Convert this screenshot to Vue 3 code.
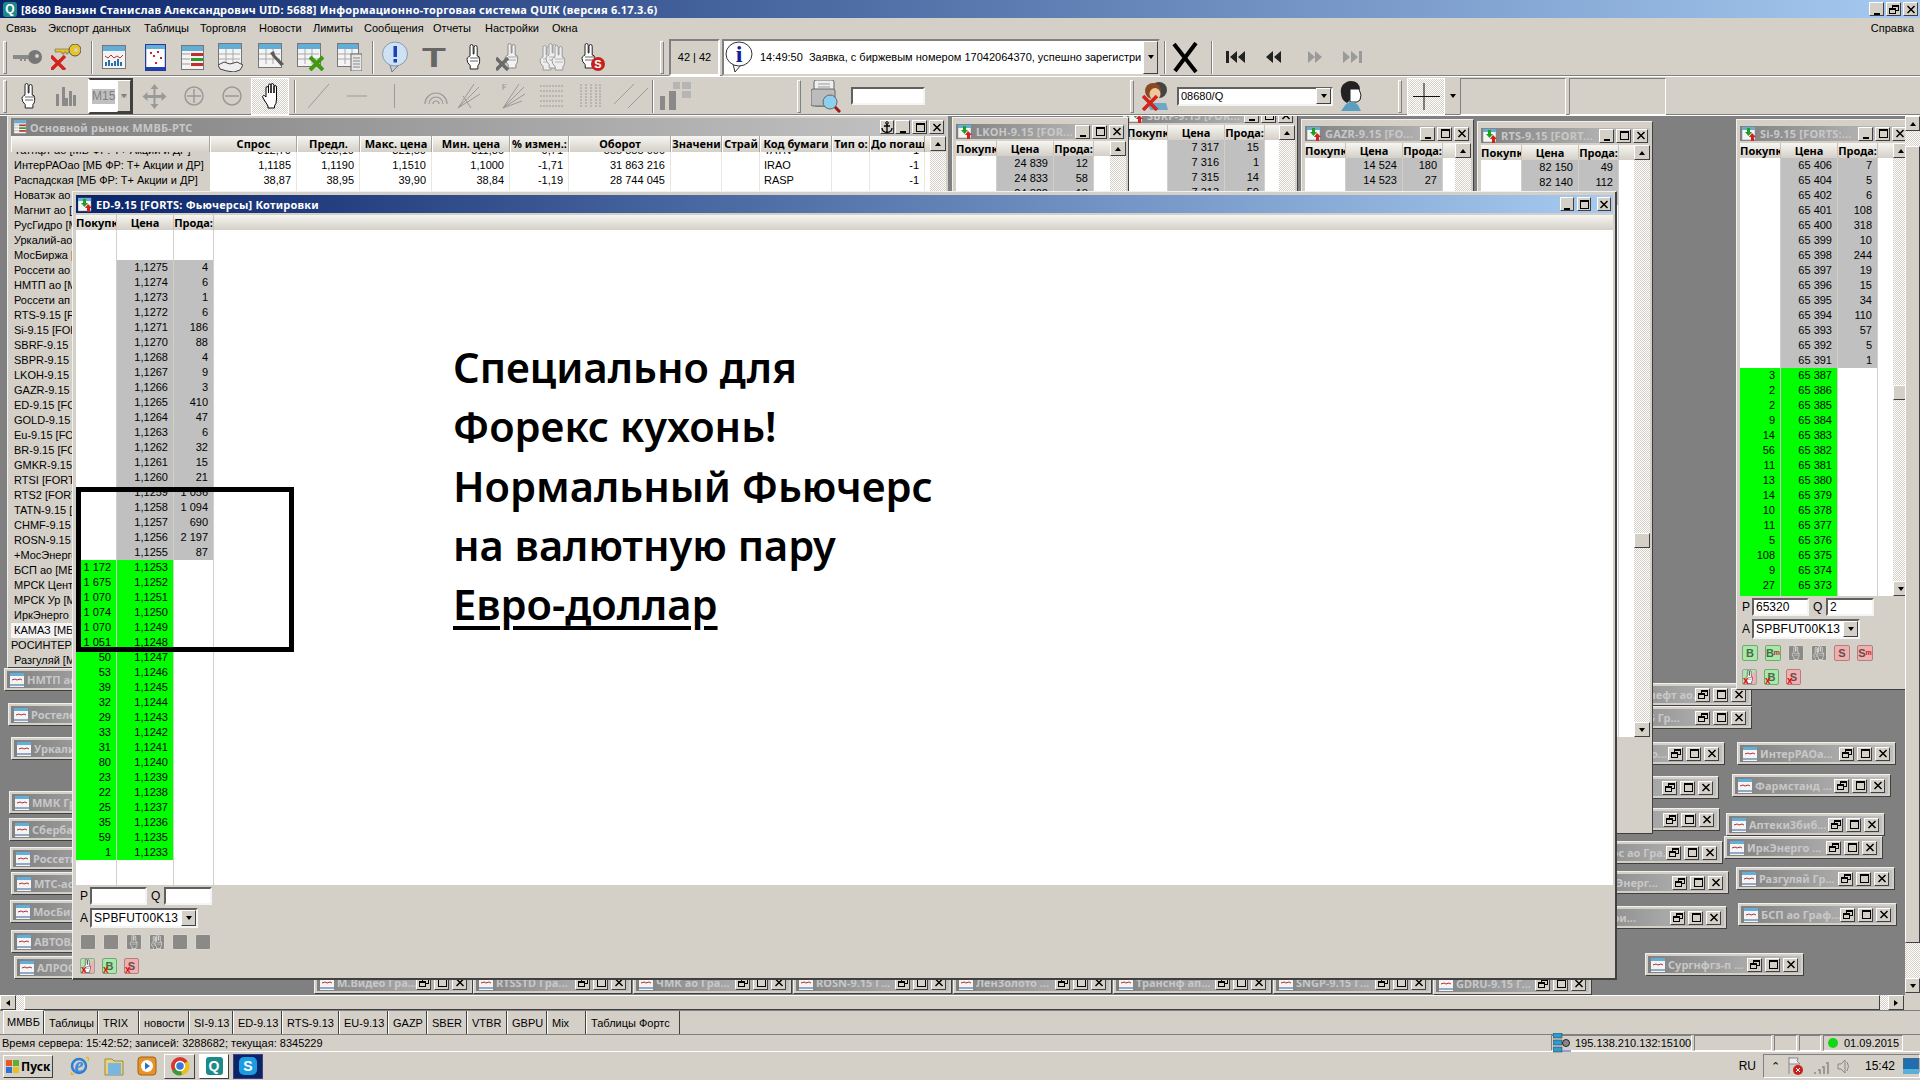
<script setup>
// QUIK terminal screenshot. MDI windows keep their place on the canvas, everything else flows.
const MDI_TOP = 116

const handPath = 'M5 12V2.5q0-2 1.6-2t1.6 2V10h.8V3.5q0-2 1.6-2t1.6 2V12q2.4.2 2.4 2.4v3.2q0 2.6-1.7 4V25H5.2v-3.4Q2 18.8 2 15.4q0-1.8 1.4-2.4z'
const hand = (dx = 0, dy = 0, fill = '#fff', stroke = '#222') =>
  `<path transform="translate(${dx} ${dy})" d="${handPath}" fill="${fill}" stroke="${stroke}" stroke-width="1"/><path transform="translate(${dx} ${dy})" d="M5 14h9M5 17h8" stroke="${stroke}" stroke-width=".7" fill="none"/>`
const redX = (x, y, s = 12, c = '#c8201c', sw = 3) =>
  `<path d="M${x} ${y}l${s} ${s}M${x + s} ${y}l-${s} ${s}" stroke="${c}" stroke-width="${sw}"/>`
const sheet = (w, h, inner = '') =>
  `<rect x=".5" y=".5" width="${w - 1}" height="${h - 1}" fill="#f4f4f4" stroke="#777"/><rect x="1" y="1" width="${w - 2}" height="5" fill="#62aed6"/>${inner}`
const grid = 'M1 11h21M1 16h21M8 6v15M15 6v15'

const icons = {
  keyGray: '<path d="M0 5h15v4h-2v2h-2V9H9v2H7V9H0z" fill="#8a8a8a"/><circle cx="22" cy="7" r="7" fill="#777"/><circle cx="24" cy="6" r="2" fill="#d4d0c8"/>',
  keyYellow: '<path d="M4 5h15v3h-2v2h-2V8h-2v2h-2V8H4z" fill="#e8c422" stroke="#666" stroke-width=".6"/><circle cx="24" cy="6" r="6" fill="#e8c422" stroke="#555"/><circle cx="25" cy="6" r="2" fill="#d4d0c8"/>' + redX(0, 12, 14, '#d2231c', 3.4),
  chart: sheet(24, 24, '<path d="M3 11l3 2 3-3 3 3 3-2 3 2 3-3" stroke="#c03030" fill="none"/><path d="M4 21v-4M7 21v-6M10 21v-3M13 21v-5M16 21v-7M19 21v-4" stroke="#2a6fa8" stroke-width="2"/>'),
  dots: '<rect x=".5" y=".5" width="20" height="26" fill="#fff" stroke="#223a9a" stroke-width="1.5"/><rect x="1" y="1" width="19" height="4" fill="#62aed6"/><rect x="1" y="23" width="19" height="3" fill="#2040b0"/><path d="M5 9h2M12 8h2M8 12h2M15 14h2M10 19h2" stroke="#d02020" stroke-width="2"/>',
  rows: sheet(23, 25, '<path d="M1 9h8M1 14h8M1 19h8" stroke="#9a9a9a"/><rect x="10" y="8" width="12" height="3" fill="#c03030"/><rect x="10" y="13" width="12" height="3" fill="#2a9a30"/><rect x="10" y="18" width="12" height="3" fill="#c03030"/>'),
  shake: sheet(24, 22, `<path d="${grid}" stroke="#aaa" fill="none"/>`) + '<path d="M0 22l6-3 6 2 7-2 6 3-3 5-6 2-7-1-7-2z" fill="#eee" stroke="#444"/>',
  wrench: sheet(24, 25, `<path d="${grid}" stroke="#aaa" fill="none"/>`) + '<path d="M12 10l3 4 8 9 3-2-9-9-1-4z" fill="#5a5a5a"/>',
  tblX: sheet(24, 24, `<path d="${grid}" stroke="#aaa" fill="none"/>`) + redX(13, 14, 13, '#3f9a12', 4),
  tblDoc: sheet(22, 24, `<path d="${grid}" stroke="#aaa" fill="none"/>`) + '<rect x="14" y="11" width="11" height="17" fill="#e6e6e6" stroke="#666"/><path d="M16 15h7M16 18h7M16 21h7M16 24h7" stroke="#888"/>',
  alert: '<path d="M8 24l2 7 6-6z" fill="#bcd0e0" stroke="#777"/><ellipse cx="13" cy="13" rx="12.5" ry="12" fill="#cfe2f3" stroke="#8a9aaa"/><rect x="11.500" y="5" width="3.500" height="11" fill="#1844b8"/><rect x="11.500" y="18" width="3.500" height="3.500" fill="#1844b8"/>',
  tee: '<text x="8.6" y="24" transform="scale(1.4 1)" text-anchor="middle" font-family="Liberation Sans" font-weight="700" font-size="28" fill="#666">T</text>',
  hand: hand(0, 0),
  handX: hand(7, 0, '#f2f2f2', '#888') + redX(0, 15, 12, '#6a6a6a', 3.4),
  hands: hand(0, 2, '#eee', '#999') + hand(6, 0, '#eee', '#999') + hand(12, 2, '#eee', '#999'),
  handW: hand(3, 0, '#8c8a86', '#fff'),
  handsW: hand(0, 2, '#8c8a86', '#fff') + hand(6, 0, '#8c8a86', '#fff'),
  handS: hand(0, 0) + '<circle cx="18" cy="21" r="7" fill="#c8201c"/><text x="18" y="25" text-anchor="middle" font-family="Liberation Sans" font-weight="700" font-size="11" fill="#fff">S</text>',
  info: '<path d="M8 23l2 8 6-7z" fill="#fff" stroke="#333"/><ellipse cx="14" cy="13" rx="13" ry="12" fill="#fff" stroke="#333"/><text x="14" y="21" text-anchor="middle" font-family="Liberation Serif" font-weight="700" font-size="24" fill="#1020a0">i</text>',
  bigX: '<path d="M2 2l22 28M24 1L3 29" stroke="#000" stroke-width="4"/>',
  first: '<path d="M0 0h3v12H0zM11 0v12L4 6zM19 0v12l-7-6z" fill="#222"/>',
  prev: '<path d="M9 0v12L2 6zM17 0v12l-7-6z" fill="#222"/>',
  next: '<path d="M0 0v12l7-6zM7 0v12l7-6z" fill="#9a9a9a"/>',
  last: '<path d="M0 0v12l7-6zM8 0v12l7-6zM16 0h3v12h-3z" fill="#9a9a9a"/>',
  bars: '<path d="M1 10h3v12H1zM7 3h3v19H7zM10 14h3v8h-3zM14 7h3v15h-3zM18 11h3v11h-3z" fill="#8a8a8a"/>',
  move: '<path d="M12.500 0l4 5h-3v6h6V8l5 4.500-5 4.500v-3h-6v6h3l-4 5-4-5h3v-6h-6v3l-5-4.500 5-4.500v3h6V5h-3z" fill="#9a9a9a"/>',
  plus: '<circle cx="10" cy="10" r="9" fill="none" stroke="#9a9a9a" stroke-width="1.500"/><path d="M3 10h14M10 3v14" stroke="#9a9a9a" stroke-width="1.500"/>',
  minus: '<circle cx="10" cy="10" r="9" fill="none" stroke="#9a9a9a" stroke-width="1.500"/><path d="M3 10h14" stroke="#9a9a9a" stroke-width="1.500"/>',
  palm: '<path d="M5 12V5q0-1.500 1.200-1.500T7.500 5v5V2.500q0-1.500 1.200-1.500t1.300 1.500V10V2q0-1.500 1.200-1.500T13 2v8V4q0-1.500 1.200-1.500T15.500 4v12q0 5-2 7v2H7v-2l-5-8q-1-2 .5-2.500 1-.4 2.500 1.500z" fill="#fff" stroke="#000"/>',
  diag: '<path d="M0 24L21 0" stroke="#9a9a9a"/>',
  horz: '<path d="M0 5h20" stroke="#9a9a9a"/>',
  vert: '<path d="M1.500 0v24" stroke="#9a9a9a"/>',
  arc: '<path d="M1 17a11 11 0 0 1 22 0M5 17a7 7 0 0 1 14 0M9 17a3 3 0 0 1 6 0" fill="none" stroke="#9a9a9a" stroke-width="1.200"/>',
  fan: '<path d="M1 24L22 3M1 24L17 0M1 24L23 10M6 12l8 12" stroke="#9a9a9a" fill="none"/>',
  fanF: '<path d="M1 24L22 3M1 24L17 0M1 24L23 10M1 24L20 17" stroke="#9a9a9a" fill="none"/><path d="M1 0h4M1 0v6M1 3h3" stroke="#9a9a9a"/>',
  lines: '<path d="M0 1h23M0 6h23M0 11h23M0 16h23M0 21h23" stroke="#9a9a9a" stroke-dasharray="2 1"/>',
  vlines: '<path d="M1 0v24M6 0v24M11 0v24M16 0v24M20 0v24" stroke="#9a9a9a" stroke-dasharray="2 1"/>',
  dlines: '<path d="M0 20L20 0M14 24L34 4" stroke="#9a9a9a"/>',
  candles: '<rect x="0" y="14" width="5" height="14" fill="#8a8a8a"/><rect x="9" y="9" width="7" height="19" fill="#8a8a8a"/><rect x="13" y="0" width="7" height="7" fill="#b5b5b5"/><rect x="22" y="0" width="9" height="7" fill="#b5b5b5"/><rect x="22" y="9" width="9" height="7" fill="#b5b5b5"/>',
  search: '<rect x="3" y="0" width="20" height="26" rx="2" fill="#eee" stroke="#666"/><rect x="0" y="9" width="24" height="17" rx="2" fill="#bcbcbc" stroke="#666"/><path d="M7 4h12M7 7h12" stroke="#999"/><circle cx="19" cy="22" r="7" fill="#8cd0f0" stroke="#666"/><path d="M24 27l5 5" stroke="#a01818" stroke-width="3"/>',
  users: '<circle cx="17" cy="9" r="8" fill="#444"/><circle cx="11" cy="10" r="8" fill="#8a4a20"/><ellipse cx="13" cy="13" rx="5.500" ry="6" fill="#f0c8a0"/><path d="M6 22h18l2 7H8z" fill="#6ea8c8"/>' + redX(1, 15, 14, '#d2231c', 3.6),
  user: '<path d="M11 1A10 10 0 0 0 1 13q0 7 6 10l3-3V9h10Q19 1 11 1z" fill="#222"/><path d="M10 9h9l2 6-1 5-3 2h-7z" fill="#fff" stroke="#222"/><path d="M1 31l5-7 4-2h4l4 3 3 6z" fill="#5a9fc0"/>',
  cross: '<path d="M11 0v27M0 13.500h27" stroke="#111"/>',
  globe: '<circle cx="10" cy="11" r="7" fill="none" stroke="#2f7fd0" stroke-width="2.500"/><text x="10" y="17" text-anchor="middle" font-family="Liberation Serif" font-style="italic" font-weight="700" font-size="20" fill="#3a8ae0">e</text><path d="M3 17Q1 21 5 19M17 3q4-2 2 3" stroke="#e8b820" stroke-width="1.500" fill="none"/>',
  folder: '<path d="M1 4h7l2 2h9v14H1z" fill="#e8d27a" stroke="#9a8a40"/><path d="M4 8h13v12H4z" fill="#7ab4e0"/>',
  media: '<rect x="1" y="1" width="18" height="18" rx="3" fill="#e8932a" stroke="#a06010"/><circle cx="10" cy="10" r="6" fill="#fff"/><path d="M8 6.500v7l5-3.500z" fill="#2a70c0"/>',
  chrome: '<circle cx="10" cy="10" r="9" fill="#d8382c"/><path d="M10 10L2 15a9 9 0 0 0 10 4z" fill="#3a9a3a"/><path d="M10 10l2 9a9 9 0 0 0 6-14z" fill="#e8c020"/><circle cx="10" cy="10" r="4.500" fill="#3a78d8" stroke="#fff" stroke-width="1.500"/>',
  flag: '<path d="M2 1v17M2 2h9l-1 3 3 3H2" fill="#eee" stroke="#888"/><circle cx="11" cy="14" r="5" fill="#c8201c"/><path d="M9 12l4 4M13 12l-4 4" stroke="#fff"/>',
  signal: '<path d="M1 15h2M5 12h2v4M9 9h2v7M13 5h2v11" fill="none" stroke="#888" stroke-width="1.500"/>',
  sound: '<path d="M1 6h3l4-4v13l-4-4H1zM10 4q3 4 0 9" fill="none" stroke="#888"/>',
  desk: '<rect x="0" y="0" width="16" height="14" fill="#1f6fb0" stroke="#666"/><rect x="0" y="11" width="16" height="5" fill="#5ab0d8"/>',
  net: '<rect x="0" y="0" width="9" height="5" fill="#2d9ad0" stroke="#333" stroke-width=".5"/><rect x="0" y="7" width="9" height="5" fill="#2d9ad0" stroke="#333" stroke-width=".5"/><rect x="0" y="14" width="9" height="5" fill="#2d9ad0" stroke="#333" stroke-width=".5"/><circle cx="13" cy="10" r="3.500" fill="#888" stroke="#222"/><path d="M9 18h9" stroke="#2040b0"/>',
  anchor: '<path d="M6 2.500v9M3 5h6M1 7q0 4 5 4.500Q11 11 11 7" fill="none" stroke="#000" stroke-width="1.300"/><circle cx="6" cy="2" r="1.300" fill="none" stroke="#000"/>'
}

const glyphs = {
  min: '<rect x="3" y="9" width="6" height="2" fill="#000"/>',
  max: '<rect x="2.500" y="1.500" width="8" height="8" fill="none" stroke="#000"/><rect x="2" y="1" width="9" height="2" fill="#000"/>',
  rest: '<rect x="4.500" y="1.500" width="6" height="5" fill="none" stroke="#000"/><rect x="4" y="1" width="7" height="2" fill="#000"/><rect x="1.500" y="4.500" width="6" height="5" fill="#d4d0c8" stroke="#000"/><rect x="1" y="4" width="7" height="2" fill="#000"/>',
  close: '<path d="M2.500 2l7 7M9.500 2l-7 7" stroke="#000" stroke-width="1.500"/>'
}

const miniIcon = '<rect x="0" y="0" width="14" height="14" fill="#f4f4f4"/><rect x="0" y="0" width="14" height="3" fill="#62aed6"/><path d="M2 7l3-1 2 1 3-1 2 1" stroke="#b03030" fill="none"/><path d="M1 13v-2M3 13v-2M5 13v-2M7 13v-2M9 13v-2M11 13v-2M13 13v-2" stroke="#2a5f98"/>'
const quoteIcon = '<rect x="0" y="1" width="13" height="13" fill="#f4f4f4" stroke="#888" stroke-width=".5"/><rect x="0" y="1" width="13" height="3" fill="#62aed6"/><path d="M5 2h3v4h2L6.500 10 3 6h2z" fill="#1ea01e"/><path d="M10 7l4 4h-2v4H9v-4H7z" fill="#d02020"/>'

// gap in front of a toolbar item comes from its x on the bar
const flow = list => {
  let end = 0
  return list.map(it => {
    const out = { ...it, ml: it.x - end }
    end = it.x + it.w
    return out
  })
}

const toolbar1 = flow([
  { x: 3, w: 4, k: 'grip' },
  { x: 13, w: 30, h: 15, k: 'ic', i: 'keyGray' },
  { x: 51, w: 30, h: 26, k: 'ic', i: 'keyYellow' },
  { x: 91, w: 2, k: 'sep' },
  { x: 102, w: 24, h: 24, k: 'ic', i: 'chart' },
  { x: 145, w: 21, h: 27, k: 'ic', i: 'dots' },
  { x: 181, w: 23, h: 25, k: 'ic', i: 'rows' },
  { x: 218, w: 25, h: 29, k: 'ic', i: 'shake' },
  { x: 258, w: 26, h: 29, k: 'ic', i: 'wrench' },
  { x: 297, w: 27, h: 28, k: 'ic', i: 'tblX' },
  { x: 337, w: 25, h: 28, k: 'ic', i: 'tblDoc' },
  { x: 372, w: 2, k: 'sep' },
  { x: 382, w: 26, h: 32, k: 'ic', i: 'alert' },
  { x: 422, w: 24, h: 28, k: 'ic', i: 'tee' },
  { x: 465, w: 17, h: 26, k: 'ic', i: 'hand' },
  { x: 496, w: 24, h: 28, k: 'ic', i: 'handX' },
  { x: 538, w: 30, h: 28, k: 'ic', i: 'hands' },
  { x: 580, w: 26, h: 29, k: 'ic', i: 'handS' },
  { x: 660, w: 4, k: 'grip' },
  { x: 669, w: 51, k: 'counter' },
  { x: 722, w: 438, k: 'msg' },
  { x: 1164, w: 2, k: 'sep' },
  { x: 1172, w: 26, h: 31, k: 'ic', i: 'bigX' },
  { x: 1211, w: 2, k: 'sep' },
  { x: 1226, w: 19, h: 12, k: 'ic', i: 'first' },
  { x: 1264, w: 17, h: 12, k: 'ic', i: 'prev' },
  { x: 1308, w: 14, h: 12, k: 'ic', i: 'next' },
  { x: 1343, w: 19, h: 12, k: 'ic', i: 'last' }
])

const toolbar2 = flow([
  { x: 3, w: 4, k: 'grip' },
  { x: 20, w: 18, h: 26, k: 'ic', i: 'hand' },
  { x: 55, w: 23, h: 24, k: 'ic', i: 'bars' },
  { x: 88, w: 45, k: 'period' },
  { x: 142, w: 25, h: 25, k: 'ic', i: 'move' },
  { x: 184, w: 20, h: 20, k: 'ic', i: 'plus' },
  { x: 222, w: 20, h: 20, k: 'ic', i: 'minus' },
  { x: 251, w: 38, k: 'press', i: 'palm', iw: 18, ih: 26 },
  { x: 294, w: 2, k: 'sep' },
  { x: 308, w: 21, h: 24, k: 'ic', i: 'diag' },
  { x: 347, w: 20, h: 10, k: 'ic', i: 'horz' },
  { x: 393, w: 3, h: 24, k: 'ic', i: 'vert' },
  { x: 424, w: 24, h: 18, k: 'ic', i: 'arc' },
  { x: 457, w: 24, h: 25, k: 'ic', i: 'fan' },
  { x: 502, w: 24, h: 25, k: 'ic', i: 'fanF' },
  { x: 540, w: 23, h: 22, k: 'ic', i: 'lines' },
  { x: 580, w: 21, h: 24, k: 'ic', i: 'vlines' },
  { x: 614, w: 34, h: 24, k: 'ic', i: 'dlines' },
  { x: 652, w: 2, k: 'sep' },
  { x: 660, w: 33, h: 28, k: 'ic', i: 'candles' },
  { x: 797, w: 4, k: 'grip' },
  { x: 811, w: 30, h: 33, k: 'ic', i: 'search' },
  { x: 851, w: 74, k: 'find' },
  { x: 1130, w: 4, k: 'grip' },
  { x: 1142, w: 27, h: 30, k: 'ic', i: 'users' },
  { x: 1177, w: 156, k: 'client' },
  { x: 1340, w: 22, h: 32, k: 'ic', i: 'user' },
  { x: 1398, w: 4, k: 'grip' },
  { x: 1407, w: 38, k: 'press', i: 'cross', iw: 27, ih: 27 },
  { x: 1447, w: 11, k: 'drop' },
  { x: 1460, w: 106, k: 'sunk' },
  { x: 1569, w: 97, k: 'sunk' }
])

const menu = [
  ['Связь', 42], ['Экспорт данных', 96], ['Таблицы', 56], ['Торговля', 59], ['Новости', 54],
  ['Лимиты', 51], ['Сообщения', 69], ['Отчеты', 52], ['Настройки', 67], ['Окна', 40]
]

const tabs = [
  ['ММВБ', 41, true], ['Таблицы', 54], ['TRIX', 41], ['новости', 50], ['SI-9.13', 44], ['ED-9.13', 49],
  ['RTS-9.13', 57], ['EU-9.13', 49], ['GAZP', 39], ['SBER', 40], ['VTBR', 40], ['GBPU', 40], ['Mix', 39], ['Таблицы Фортс', 94]
]

const tail = ' [МБ ФР: Т+ Акции и ДР]'
const forts = ' [FORTS: Фьючерсы]'
const mainRows = [
  ['Татнфт ао' + tail, '312,70', '313,10', '321,50', '311,80', '-0,71', '555 555 000', 'TATN', '-1'],
  ['ИнтерРАОао' + tail, '1,1185', '1,1190', '1,1510', '1,1000', '-1,71', '31 863 216', 'IRAO', '-1'],
  ['Распадская' + tail, '38,87', '38,95', '39,90', '38,84', '-1,19', '28 744 045', 'RASP', '-1'],
  ['Новатэк ао' + tail, '619,0', '619,5', '637,0', '618,0', '-2,10', '287 721 087', 'NVTK', '-1']
].map(r => ({ name: r[0], cells: r.slice(1) }))

const sideNames = [
  'Магнит ао' + tail, 'РусГидро' + tail, 'Уркалий-ао' + tail, 'МосБиржа' + tail, 'Россети ао' + tail, 'НМТП ао' + tail, 'Россети ап' + tail,
  'RTS-9.15' + forts, 'Si-9.15' + forts, 'SBRF-9.15' + forts, 'SBPR-9.15' + forts, 'LKOH-9.15' + forts, 'GAZR-9.15' + forts, 'ED-9.15' + forts,
  'GOLD-9.15' + forts, 'Eu-9.15' + forts, 'BR-9.15' + forts, 'GMKR-9.15' + forts, 'RTSI' + forts, 'RTS2' + forts, 'TATN-9.15' + forts,
  'CHMF-9.15' + forts, 'ROSN-9.15' + forts, '+МосЭнерго' + tail, 'БСП ао' + tail, 'МРСК Центр' + tail, 'МРСК Ур' + tail, 'ИркЭнерго' + tail,
  'КАМАЗ' + tail, 'РОСИНТЕРао' + tail, 'Разгуляй' + tail
]

const mainCols = [
  ['', 199], ['Спрос', 87], ['Предл.', 63], ['Макс. цена', 72], ['Мин. цена', 78], ['% измен.:', 59], ['Оборот', 102],
  ['Значени', 51], ['Страй', 38], ['Код бумаги', 72], ['Тип о:', 38], ['До погаш', 55]
]

const minis = [
  ['НМТП ао Гра...', 4, 668], ['Ростелеком ...', 8, 703], ['Уркалий-ао ...', 11, 737], ['ММК Графи...', 9, 791], ['Сбербанк ао...', 9, 818],
  ['Россети ао...', 10, 847], ['МТС-ао Гра...', 11, 872], ['МосБиржа Г...', 10, 900], ['АВТОВАЗ ао...', 11, 930], ['АЛРОСА ао...', 14, 956],
  ['М.Видео Гра...', 314, 971], ['RTSSTD Гра...', 473, 971], ['ЧМК ао Гра...', 633, 971], ['ROSN-9.15 Г...', 793, 971], ['ЛенЗолото ...', 953, 971],
  ['Транснф ап...', 1113, 971], ['SNGP-9.15 Г...', 1273, 971], ['GDRU-9.15 Г...', 1433, 972],
  ['Транснефт ао...', 1593, 683], ['Eu-9.15 Гр...', 1593, 706], ['Сургнфгз ао...', 1566, 742], ['ФосАгро а...', 1560, 776], ['Северст...', 1561, 808],
  ['Полюс ао Гра...', 1564, 841], ['МосЭнерг...', 1570, 871], ['Графи...', 1568, 906],
  ['ИнтерРАОа...', 1737, 742], ['Фармстанд ...', 1732, 774], ['Аптеки3биб...', 1726, 813], ['ИркЭнерго ...', 1724, 836],
  ['Разгуляй Гр...', 1736, 867], ['БСП ао Граф...', 1738, 903], ['Сургнфгз-п ...', 1645, 953]
].map(([t, x, y]) => ({ t, x, y }))

const ask = (price, sell) => ({ buy: '', price, sell, kind: 'ask' })
const bid = (buy, price) => ({ buy, price, sell: '', kind: 'bid' })

const edAsk = [['1,1275', '4'], ['1,1274', '6'], ['1,1273', '1'], ['1,1272', '6'], ['1,1271', '186'], ['1,1270', '88'], ['1,1268', '4'], ['1,1267', '9'], ['1,1266', '3'], ['1,1265', '410'], ['1,1264', '47'], ['1,1263', '6'], ['1,1262', '32'], ['1,1261', '15'], ['1,1260', '21'], ['1,1259', '1 056'], ['1,1258', '1 094'], ['1,1257', '690'], ['1,1256', '2 197'], ['1,1255', '87']]
const edBid = [['1 172', '1,1253'], ['1 675', '1,1252'], ['1 070', '1,1251'], ['1 074', '1,1250'], ['1 070', '1,1249'], ['1 051', '1,1248'], ['50', '1,1247'], ['53', '1,1246'], ['39', '1,1245'], ['32', '1,1244'], ['29', '1,1243'], ['33', '1,1242'], ['31', '1,1241'], ['80', '1,1240'], ['23', '1,1239'], ['22', '1,1238'], ['25', '1,1237'], ['35', '1,1236'], ['59', '1,1235'], ['1', '1,1233']]
const siAsk = [['65 406', '7'], ['65 404', '5'], ['65 402', '6'], ['65 401', '108'], ['65 400', '318'], ['65 399', '10'], ['65 398', '244'], ['65 397', '19'], ['65 396', '15'], ['65 395', '34'], ['65 394', '110'], ['65 393', '57'], ['65 392', '5'], ['65 391', '1']]
const siBid = [['3', '65 387'], ['2', '65 386'], ['2', '65 385'], ['9', '65 384'], ['14', '65 383'], ['56', '65 382'], ['11', '65 381'], ['13', '65 380'], ['14', '65 379'], ['10', '65 378'], ['11', '65 377'], ['5', '65 376'], ['108', '65 375'], ['9', '65 374'], ['27', '65 373']]

const book = (asks, bids = []) => [...asks.map(a => ask(...a)), ...bids.map(b => bid(...b))]

const quotes = [
  { title: 'SBRF-9.15 [FOR...', x: 1123, y: 101, w: 175, h: 400, bodyH: 360, rows: book([['7 317', '15'], ['7 316', '1'], ['7 315', '14'], ['7 313', '50']]), scroll: true },
  { title: 'LKOH-9.15 [FOR...', x: 952, y: 117, w: 177, h: 400, bodyH: 360, rows: book([['24 839', '12'], ['24 833', '58'], ['24 822', '18']]), scroll: true },
  { title: 'GAZR-9.15 [FO...', x: 1301, y: 119, w: 173, h: 400, bodyH: 360, rows: book([['14 524', '180'], ['14 523', '27'], ['14 522', '5']]), scroll: true },
  { title: 'RTS-9.15 [FORT...', x: 1477, y: 121, w: 176, h: 713, bodyH: 577, rows: book([['82 150', '49'], ['82 140', '112'], ['82 130', '20']]), scroll: true, thumb: 373 },
  {
    title: 'Si-9.15 [FORTS:...', x: 1736, y: 119, w: 176, h: 571, bodyH: 438, rows: book(siAsk, siBid), scroll: true, thumb: 227, extra: 3,
    panel: { p: '65320', q: '2', pad: 2, row3: ['B', 'Bm', 'hd', 'hs', 'S', 'Sm'] }
  },
  {
    title: 'ED-9.15 [FORTS: Фьючерсы] Котировки', active: true, x: 72, y: 191, w: 1545, h: 789, bodyH: 655, rows: book(edAsk, edBid), blank: 30,
    panel: { p: '', q: '', pad: 4, row3: ['off', 'off', 'hd', 'hs', 'off', 'off'] }
  }
]

const pasted = ['Специально для', 'Форекс кухонь!', 'Нормальный Фьючерс', 'на валютную пару']

const box = (x, y, w, h) => ({ left: x + 'px', top: y - MDI_TOP + 'px', width: w + 'px', height: h + 'px' })
</script>

<template>
  <div class="screen">
    <header class="app-title">
      <span class="app-q">Q</span>
      <span class="app-name">[8680 Ванзин Станислав Александрович UID: 5688] Информационно-торговая система QUIK (версия 6.17.3.6)</span>
      <span class="wbtns big">
        <span class="wbtn"><svg width="12" height="11" v-html="glyphs.min"></svg></span>
        <span class="wbtn"><svg width="12" height="11" v-html="glyphs.rest"></svg></span>
        <span class="wbtn"><svg width="12" height="11" v-html="glyphs.close"></svg></span>
      </span>
    </header>

    <nav class="menu">
      <span v-for="m in menu" :key="m[0]" class="menu-item" :style="{ width: m[1] + 'px' }">{{ m[0] }}</span>
      <span class="menu-help">Справка</span>
    </nav>

    <div v-for="(bar, bi) in [toolbar1, toolbar2]" :key="bi" class="toolbar">
      <template v-for="(it, n) in bar" :key="n">
        <span v-if="it.k === 'grip'" class="grip" :style="{ marginLeft: it.ml + 'px' }"></span>
        <span v-else-if="it.k === 'sep'" class="sep" :style="{ marginLeft: it.ml + 'px' }"></span>
        <svg v-else-if="it.k === 'ic'" class="icon" :width="it.w" :height="it.h" :style="{ marginLeft: it.ml + 'px' }" v-html="icons[it.i]"></svg>
        <span v-else-if="it.k === 'counter'" class="counter" :style="{ marginLeft: it.ml + 'px', width: it.w + 'px' }">42 | 42</span>
        <span v-else-if="it.k === 'msg'" class="msg" :style="{ marginLeft: it.ml + 'px', width: it.w + 'px' }">
          <svg class="msg-i" width="30" height="32" v-html="icons.info"></svg>
          <span class="msg-text">14:49:50&nbsp; Заявка, с биржевым номером 17042064370, успешно зарегистри</span>
          <span class="arrow-btn tall"><i class="tri down"></i></span>
        </span>
        <span v-else-if="it.k === 'period'" class="period" :style="{ marginLeft: it.ml + 'px', width: it.w + 'px' }">
          <span class="period-val">M15</span>
          <span class="arrow-btn fill"><i class="tri down gray"></i></span>
        </span>
        <span v-else-if="it.k === 'press'" class="press" :style="{ marginLeft: it.ml + 'px', width: it.w + 'px' }">
          <svg :width="it.iw" :height="it.ih" v-html="icons[it.i]"></svg>
        </span>
        <span v-else-if="it.k === 'find'" class="field find" :style="{ marginLeft: it.ml + 'px', width: it.w + 'px' }"></span>
        <span v-else-if="it.k === 'client'" class="field client" :style="{ marginLeft: it.ml + 'px', width: it.w + 'px' }">
          <span class="client-val">08680/Q</span>
          <span class="arrow-btn small"><i class="tri down"></i></span>
        </span>
        <span v-else-if="it.k === 'drop'" class="drop" :style="{ marginLeft: it.ml + 'px', width: it.w + 'px' }"><i class="tri down"></i></span>
        <span v-else-if="it.k === 'sunk'" class="sunk" :style="{ marginLeft: it.ml + 'px', width: it.w + 'px' }"></span>
      </template>
    </div>

    <div class="work">
      <main class="mdi">
        <!-- minimised chart windows -->
        <div v-for="m in minis" :key="m.t + m.x" class="mini" :style="box(m.x, m.y, 159, 23)">
          <div class="mini-bar">
            <svg class="mini-ic" width="14" height="14" v-html="miniIcon"></svg>
            <span class="mini-t">{{ m.t }}</span>
            <span class="wbtns">
              <span class="wbtn"><svg width="12" height="11" v-html="glyphs.rest"></svg></span>
              <span class="wbtn"><svg width="12" height="11" v-html="glyphs.max"></svg></span>
              <span class="wbtn"><svg width="12" height="11" v-html="glyphs.close"></svg></span>
            </span>
          </div>
        </div>

        <!-- main table -->
        <section class="mainwin" :style="box(7, 116, 941, 552)">
          <div class="win-title inactive main-t">
            <svg class="ic-tbl" width="14" height="14" v-html="icons.rows" viewBox="0 0 23 25"></svg>
            <span class="win-name">Основной рынок ММВБ-РТС</span>
            <span class="anchor"><svg width="12" height="14" v-html="icons.anchor"></svg></span>
            <span class="wbtns">
              <span class="wbtn"><svg width="12" height="11" v-html="glyphs.min"></svg></span>
              <span class="wbtn"><svg width="12" height="11" v-html="glyphs.max"></svg></span>
              <span class="wbtn"><svg width="12" height="11" v-html="glyphs.close"></svg></span>
            </span>
          </div>
          <div class="main-head">
            <span v-for="c in mainCols" :key="c[0]" class="mh" :style="{ width: c[1] + 'px' }">{{ c[0] }}</span>
            <span class="mh-gap"></span>
            <span class="arrow-btn sb-up"><i class="tri up"></i></span>
          </div>
          <div class="main-body">
            <div class="main-table">
              <div v-for="r in mainRows" :key="r.name" class="mrow">
                <span class="mname">{{ r.name }}</span>
                <span class="mc w87 r">{{ r.cells[0] }}</span>
                <span class="mc w63 r">{{ r.cells[1] }}</span>
                <span class="mc w72 r">{{ r.cells[2] }}</span>
                <span class="mc w78 r">{{ r.cells[3] }}</span>
                <span class="mc w59 r">{{ r.cells[4] }}</span>
                <span class="mc w102 r">{{ r.cells[5] }}</span>
                <span class="mc w51"></span>
                <span class="mc w38"></span>
                <span class="mc w72 code">{{ r.cells[6] }}</span>
                <span class="mc w38"></span>
                <span class="mc w55 r">{{ r.cells[7] }}</span>
              </div>
              <div v-for="(n, i) in sideNames" :key="i" class="mrow">
                <span class="mname" :class="{ hl: n.startsWith('КАМАЗ'), flush: n.startsWith('РОСИНТЕР') }">{{ n }}</span>
              </div>
            </div>
            <div class="track main-track"></div>
          </div>
        </section>

        <!-- order book windows -->
        <section v-for="q in quotes" :key="q.title" class="qwin" :class="{ top: q.active }" :style="box(q.x, q.y, q.w, q.h)">
          <div class="win-title" :class="q.active ? 'active' : 'inactive'">
            <svg class="q-ic" width="15" height="15" v-html="quoteIcon"></svg>
            <span class="win-name">{{ q.title }}</span>
            <span class="wbtns">
              <span class="wbtn"><svg width="12" height="11" v-html="glyphs.min"></svg></span>
              <span class="wbtn"><svg width="12" height="11" v-html="glyphs.max"></svg></span>
              <span class="wbtn" :class="{ far: q.active }"><svg width="12" height="11" v-html="glyphs.close"></svg></span>
            </span>
          </div>
          <div class="q-head">
            <span class="qh c-buy">Покупк</span>
            <span class="qh c-price">Цена</span>
            <span class="qh c-sell">Прода:</span>
            <span class="q-head-fill"></span>
            <span v-if="q.scroll" class="arrow-btn sb-up"><i class="tri up"></i></span>
          </div>
          <div class="q-body" :style="{ height: q.bodyH + 'px' }">
            <div class="q-col c-buy">
              <div v-if="q.blank" :style="{ height: q.blank + 'px' }"></div>
              <div v-for="r in q.rows" :key="r.price" class="cell" :class="{ green: r.kind === 'bid' }">{{ r.buy }}</div>
              <div v-if="q.extra" class="green" :style="{ height: q.extra + 'px' }"></div>
            </div>
            <div class="q-col c-price">
              <div v-if="q.blank" :style="{ height: q.blank + 'px' }"></div>
              <div v-for="r in q.rows" :key="r.price" class="cell" :class="r.kind === 'bid' ? 'green' : 'gray'">{{ r.price }}</div>
              <div v-if="q.extra" class="green" :style="{ height: q.extra + 'px' }"></div>
            </div>
            <div class="q-col c-sell">
              <div v-if="q.blank" :style="{ height: q.blank + 'px' }"></div>
              <div v-for="r in q.rows" :key="r.price" class="cell" :class="{ gray: r.kind === 'ask' }">{{ r.sell }}</div>
            </div>
            <div class="q-fill"></div>
            <div v-if="q.scroll" class="track q-track">
              <span v-if="q.thumb" class="thumb" :style="{ marginTop: q.thumb + 'px' }"></span>
              <span class="arrow-btn sb-down"><i class="tri down"></i></span>
            </div>
          </div>
          <div v-if="q.panel" class="panel" :style="{ paddingLeft: q.panel.pad + 'px' }">
            <div class="p-row">
              <span class="p-lab">P</span>
              <span class="field p-in w57">{{ q.panel.p }}</span>
              <span class="p-lab q-lab">Q</span>
              <span class="field p-in w48">{{ q.panel.q }}</span>
            </div>
            <div class="p-row two">
              <span class="p-lab">A</span>
              <span class="field p-acc">
                <span class="acc-val">SPBFUT00K13</span>
                <span class="arrow-btn small"><i class="tri down"></i></span>
              </span>
            </div>
            <div class="p-btns">
              <span v-for="(b, i) in q.panel.row3" :key="i" class="act" :class="b">
                <template v-if="b === 'B' || b === 'S'">{{ b }}</template>
                <template v-else-if="b === 'Bm' || b === 'Sm'">{{ b[0] }}<sup>m</sup></template>
                <svg v-else-if="b === 'hd' || b === 'hs'" width="14" height="14" viewBox="0 0 24 26" v-html="b === 'hd' ? icons.handW : icons.handsW"></svg>
              </span>
            </div>
            <div class="p-btns last">
              <span class="act small x-h"><svg width="13" height="14" viewBox="0 0 18 26" v-html="icons.hand"></svg><b class="xm">x</b></span>
              <span class="act small B x-b">B<b class="xm">x</b></span>
              <span class="act small S x-s">S<b class="xm">x</b></span>
            </div>
          </div>
        </section>

        <!-- text pasted over the screenshot -->
        <div class="promo">
          <p v-for="l in pasted" :key="l">{{ l }}</p>
          <p class="und">Евро-доллар</p>
        </div>
        <div class="mark"></div>
      </main>
      <aside class="vbar">
        <span class="arrow-btn v-arrow"><i class="tri up"></i></span>
        <span class="vbar-gap a"></span>
        <span class="vbar-thumb"></span>
        <span class="vbar-gap b"></span>
        <span class="arrow-btn v-arrow"><i class="tri down"></i></span>
      </aside>
    </div>

    <div class="hbar">
      <span class="arrow-btn h-arrow"><i class="tri left"></i></span>
      <span class="hbar-gap l"></span>
      <span class="hbar-thumb"></span>
      <span class="hbar-gap r"></span>
      <span class="arrow-btn h-arrow"><i class="tri right"></i></span>
    </div>

    <div class="tabs">
      <span v-for="t in tabs" :key="t[0]" class="tab" :class="{ on: t[2] }" :style="{ width: t[1] + 'px' }">{{ t[0] }}</span>
    </div>

    <footer class="status">
      <span class="st-main">Время сервера: 15:42:52; записей: 3288682; текущая: 8345229</span>
      <span class="st-cell ip"><svg width="19" height="20" v-html="icons.net"></svg>195.138.210.132:15100</span>
      <span class="st-cell w78"></span>
      <span class="st-cell w23"></span>
      <span class="st-cell w22"></span>
      <span class="st-cell date"><i class="dot"></i>01.09.2015</span>
    </footer>

    <div class="taskbar">
      <span class="start">
        <span class="flag"><i></i><i></i><i></i><i></i></span>
        Пуск
      </span>
      <svg class="tk ie" width="20" height="22" v-html="icons.globe"></svg>
      <svg class="tk fld" width="20" height="22" v-html="icons.folder"></svg>
      <svg class="tk med" width="20" height="20" v-html="icons.media"></svg>
      <span class="tk-btn chr"><svg width="20" height="20" v-html="icons.chrome"></svg></span>
      <span class="tk-btn on"><span class="tk-q">Q</span></span>
      <span class="tk-btn skype"><span class="tk-s">S</span></span>
      <span class="tray-lang">RU</span>
      <span class="tray">
        <span class="tray-up">⌃</span>
        <svg width="18" height="20" v-html="icons.flag"></svg>
        <svg width="16" height="17" v-html="icons.signal"></svg>
        <svg width="14" height="17" v-html="icons.sound"></svg>
        <span class="clock">15:42</span>
        <svg width="17" height="16" v-html="icons.desk"></svg>
      </span>
    </div>
  </div>
</template>

<style scoped>
.screen { width: 1920px; height: 1080px; display: flex; flex-direction: column; background: #d4d0c8; font: 11px "Liberation Sans", Arial, sans-serif; color: #000; overflow: hidden; }
svg { display: block; flex: none; }

.app-title { height: 18px; flex: none; display: flex; align-items: center; background: linear-gradient(90deg, #0a246a, #a6caf0); color: #fff; font: 700 11px "Noto Sans", sans-serif; letter-spacing: .22px; }
.app-q { width: 14px; height: 15px; margin: 0 4px 0 3px; border-radius: 3px; background: #1d8a8a; font: 700 12px/15px "Liberation Sans", sans-serif; text-align: center; }
.app-name { white-space: nowrap; }
.wbtns { margin-left: auto; display: flex; gap: 2px; flex: none; }
.wbtns.big { gap: 2px; margin-right: 2px; }
.wbtn { width: 15px; height: 14px; background: #d4d0c8; display: flex; align-items: center; justify-content: center; border: 1px solid; border-color: #fff #404040 #404040 #fff; box-sizing: border-box; }
.wbtn.far { margin-left: 3px; }

.menu { height: 20px; flex: none; display: flex; align-items: center; padding-left: 6px; }
.menu-item { flex: none; white-space: nowrap; }
.menu-help { margin-left: auto; margin-right: 6px; }

.toolbar { height: 39px; flex: none; display: flex; align-items: center; border-bottom: 1px solid #fff; box-shadow: inset 0 -1px 0 #808080; box-sizing: border-box; white-space: nowrap; }
.toolbar .icon { flex: none; }
.grip { width: 4px; height: 33px; flex: none; border: 1px solid; border-color: #fff #808080 #808080 #fff; box-sizing: border-box; }
.sep { width: 2px; height: 33px; flex: none; border-left: 1px solid #808080; border-right: 1px solid #fff; box-sizing: border-box; }
.counter { height: 37px; flex: none; box-sizing: border-box; border: 2px solid; border-color: #808080 #fff #fff #808080; text-align: center; line-height: 33px; }
.msg { height: 37px; flex: none; box-sizing: border-box; background: #fff; border: 2px solid; border-color: #808080 #d4d0c8 #d4d0c8 #808080; display: flex; align-items: center; position: relative; }
.msg-i { margin-left: 1px; }
.msg-text { margin-left: 5px; overflow: hidden; }
.arrow-btn { background: #d4d0c8; border: 1px solid; border-color: #fff #404040 #404040 #fff; box-sizing: border-box; display: flex; align-items: center; justify-content: center; flex: none; }
.arrow-btn.tall { margin-left: auto; width: 15px; height: 33px; }
.arrow-btn.small { margin-left: auto; width: 15px; height: 16px; }
.arrow-btn.fill { width: 14px; height: 100%; }
.tri { width: 0; height: 0; display: block; border: 0 solid transparent; }
.tri.down { border-width: 4px 3.5px 0; border-top-color: #000; }
.tri.up { border-width: 0 3.5px 4px; border-bottom-color: #000; }
.tri.left { border-width: 3.5px 4px 3.5px 0; border-right-color: #000; }
.tri.right { border-width: 3.5px 0 3.5px 4px; border-left-color: #000; }
.tri.gray { border-top-color: #808080; }

.period { height: 36px; flex: none; box-sizing: border-box; border: 2px solid; border-color: #404040 #404040 #404040 #fff; background: #fff; display: flex; align-items: center; justify-content: space-between; }
.period-val { margin-left: 2px; background: #c0c0c0; color: #808080; font-size: 12px; line-height: 15px; }
.press { height: 37px; flex: none; box-sizing: border-box; border: 1px solid #fff; background: repeating-conic-gradient(#fff 0 25%, #d4d0c8 0 50%) 0 0 / 2px 2px; display: flex; align-items: center; justify-content: center; }
.field { background: #fff; border: 2px solid; border-color: #606060 #f4f4f4 #f4f4f4 #606060; box-sizing: border-box; display: flex; align-items: center; flex: none; }
.find { height: 18px; }
.client { height: 19px; padding-left: 2px; }
.drop { height: 37px; display: flex; align-items: center; justify-content: center; flex: none; }
.sunk { height: 37px; flex: none; box-sizing: border-box; border: 1px solid; border-color: #808080 #fff #fff #808080; }

.work { height: 879px; flex: none; display: flex; }
.mdi { flex: 1; position: relative; overflow: hidden; background: #808080; }
.vbar { width: 15px; flex: none; display: flex; flex-direction: column; background: #d4d0c8; }
.v-arrow { height: 15px; width: 15px; }
.vbar-gap { display: block; background: repeating-conic-gradient(#fff 0 25%, #d4d0c8 0 50%) 0 0 / 2px 2px; flex: none; }
.vbar-gap.a { height: 15px; }
.vbar-gap.b { height: 35px; }
.vbar-thumb { height: 797px; flex: none; background: #d4d0c8; border: 1px solid; border-color: #fff #404040 #404040 #fff; box-sizing: border-box; }

.hbar { height: 15px; flex: none; display: flex; width: 1904px; }
.h-arrow { width: 16px; height: 15px; }
.hbar-gap { flex: none; background: repeating-conic-gradient(#fff 0 25%, #d4d0c8 0 50%) 0 0 / 2px 2px; }
.hbar-gap.l { width: 8px; }
.hbar-gap.r { width: 8px; }
.hbar-thumb { flex: 1; border: 1px solid; border-color: #fff #404040 #404040 #fff; box-sizing: border-box; }

.tabs { height: 24px; flex: none; display: flex; padding-left: 3px; border-top: 1px solid #808080; box-sizing: border-box; }
.tab { flex: none; box-sizing: border-box; border-right: 1px solid #404040; border-left: 1px solid #fff; padding-left: 4px; line-height: 25px; white-space: nowrap; overflow: hidden; }
.tab.on { background: #dcd9d2; border-top: 1px solid #fff; margin-top: -1px; line-height: 22px; padding-left: 3px; }

.status { height: 18px; flex: none; display: flex; align-items: center; border-top: 1px solid #808080; border-bottom: 1px solid #fff; box-sizing: border-box; }
.st-main { width: 1551px; flex: none; padding-left: 2px; box-sizing: border-box; white-space: nowrap; }
.st-cell { height: 16px; flex: none; box-sizing: border-box; border: 1px solid; border-color: #808080 #fff #fff #808080; margin-right: 2px; display: flex; align-items: center; }
.ip { width: 141px; gap: 3px; padding-left: 1px; white-space: nowrap; }
.w78 { width: 79px; }
.w23 { width: 23px; }
.w22 { width: 22px; }
.date { width: 80px; padding-left: 4px; gap: 6px; white-space: nowrap; }
.dot { width: 10px; height: 10px; border-radius: 50%; background: #12d712; flex: none; }

.taskbar { height: 28px; flex: none; display: flex; align-items: center; }
.start { width: 50px; height: 23px; margin-left: 3px; box-sizing: border-box; flex: none; border: 1px solid; border-color: #fff #404040 #404040 #fff; display: flex; align-items: center; gap: 2px; padding-left: 2px; font: 700 12px "Noto Sans", sans-serif; }
.flag { width: 13px; height: 13px; display: grid; grid-template-columns: 1fr 1fr; gap: 1px; flex: none; }
.flag i:nth-child(1) { background: #e85a20; }
.flag i:nth-child(2) { background: #60b030; }
.flag i:nth-child(3) { background: #3070d8; }
.flag i:nth-child(4) { background: #e8c020; }
.tk.ie { margin-left: 16px; }
.tk.fld { margin-left: 15px; }
.tk.med { margin-left: 13px; }
.tk-btn { width: 30px; height: 25px; box-sizing: border-box; flex: none; border: 1px solid; border-color: #fff #404040 #404040 #fff; display: flex; align-items: center; justify-content: center; margin-left: 4px; }
.tk-btn.chr { width: 31px; margin-left: 7px; }
.tk-btn.on { background: #fff; }
.tk-btn.skype { background: #0a246a; border-color: #404080; }
.tk-q { width: 17px; height: 18px; border-radius: 3px; background: #1d8a8a; color: #fff; font: 700 14px/18px "Liberation Sans", sans-serif; text-align: center; }
.tk-s { width: 18px; height: 18px; border-radius: 5px; background: #1c9be0; color: #fff; font: 700 14px/18px "Liberation Sans", sans-serif; text-align: center; }
.tray-lang { margin-left: auto; margin-right: 7px; font-size: 12px; }
.tray { height: 24px; width: 157px; box-sizing: border-box; border: 1px solid; border-color: #808080 #fff #fff #808080; display: flex; align-items: center; gap: 8px; padding-left: 7px; flex: none; }
.tray-up { font-size: 11px; width: 8px; }
.clock { margin-left: 6px; font-size: 12px; }

/* MDI windows */
.mini { position: absolute; box-sizing: border-box; background: #d4d0c8; border: 1px solid; border-color: #f0f0f0 #404040 #404040 #f0f0f0; padding: 2px; }
.mini-bar { height: 17px; display: flex; align-items: center; background: linear-gradient(90deg, #808080, #c0c0c0); padding: 0 3px 0 3px; }
.mini-bar .wbtns { gap: 3px; }
.mini-ic { margin-right: 3px; }
.mini-t { font: 700 11px "Noto Sans", sans-serif; color: #c8c8c8; white-space: nowrap; overflow: hidden; flex: 1; }

.win-title { display: flex; align-items: center; font: 700 11px "Noto Sans", sans-serif; letter-spacing: .2px; padding: 0 2px; white-space: nowrap; }
.win-title.inactive { background: linear-gradient(90deg, #808080, #c4c4c4); color: #c8c8c8; }
.win-title.active { background: linear-gradient(90deg, #0a246a, #a6caf0); color: #fff; height: 18px !important; margin-bottom: 1px; padding-right: 2px; }
.win-title.active .wbtns { gap: 3px; }
.win-title.active .wbtn { width: 14px; }
.win-name { margin-left: 3px; overflow: hidden; }

.mainwin { position: absolute; box-sizing: border-box; background: #d4d0c8; padding: 2px 2px 0 3px; display: flex; flex-direction: column; border-left: 1px solid #f0f0f0; border-bottom: 1px solid #404040; }
.main-t { height: 18px; flex: none; padding-right: 2px; }
.anchor { margin-left: auto; width: 14px; height: 14px; background: #d4d0c8; border: 1px solid; border-color: #fff #404040 #404040 #fff; box-sizing: border-box; display: flex; justify-content: center; margin-right: 1px; }
.main-t .wbtns { margin-left: 0; }
.main-head { height: 16px; flex: none; display: flex; background: linear-gradient(#f6f5f1, #d4d0c8); }
.mh { flex: none; box-sizing: border-box; border-right: 1px solid #a8a49c; border-left: 1px solid #fff; font: 700 11px/16px "Noto Sans", sans-serif; text-align: center; white-space: nowrap; overflow: hidden; }
.mh-gap { flex: 1; }
.sb-up { width: 16px; height: 15px; }
.main-body { flex: 1; display: flex; overflow: hidden; background: #fff; min-height: 0; }
.main-table { flex: 1; margin-top: -9px; overflow: hidden; }
.mrow { height: 15px; display: flex; line-height: 15px; white-space: nowrap; }
.mname { width: 199px; flex: none; box-sizing: border-box; padding-left: 3px; background: #d4d0c8; overflow: hidden; }
.mname.hl { background: #f4f4f4; }
.mname.flush { padding-left: 0; }
.mc { flex: none; box-sizing: border-box; border-right: 1px solid #e8e6e0; padding: 0 5px; }
.mc.r { text-align: right; }
.mc.code { padding-left: 4px; }
.w87 { width: 87px; } .w63 { width: 63px; } .w72 { width: 72px; } .w78 { width: 78px; } .w59 { width: 59px; }
.w102 { width: 102px; } .w51 { width: 51px; } .w38 { width: 38px; } .w55 { width: 55px; }
.track { flex: none; background: repeating-conic-gradient(#fff 0 25%, #d4d0c8 0 50%) 0 0 / 2px 2px; display: flex; flex-direction: column; }
.main-track { width: 16px; }

.qwin { position: absolute; box-sizing: border-box; background: #d4d0c8; padding: 6px 2px 0 3px; border: 1px solid; border-color: #f0f0f0 #404040 #404040 #f0f0f0; display: flex; flex-direction: column; }
.qwin.top { padding: 3px 3px 0 3px; box-shadow: inset -1px -1px 0 #404040; }
.qwin .win-title { height: 15px; flex: none; margin-bottom: 2px; }
.q-head { height: 15px; flex: none; display: flex; background: linear-gradient(#f6f5f1, #d4d0c8); }
.qh { box-sizing: border-box; font: 700 11px/15px "Noto Sans", sans-serif; white-space: nowrap; overflow: hidden; border-right: 1px solid #c8c4bc; text-align: center; }
.c-buy { width: 41px; flex: none; }
.c-price { width: 57px; flex: none; }
.c-sell { width: 40px; flex: none; }
.q-head-fill { flex: 1; }
.q-body { display: flex; background: #fff; flex: none; overflow: hidden; }
.q-col { border-right: 1px solid #d4d0c8; box-sizing: border-box; }
.cell { height: 15px; line-height: 15px; text-align: right; padding-right: 5px; box-sizing: border-box; white-space: nowrap; }
.gray { background: #c0c0c0; }
.green { background: #00ff00; }
.q-fill { flex: 1; }
.q-track { width: 16px; height: 100%; }
.thumb { display: block; height: 15px; flex: none; background: #d4d0c8; border: 1px solid; border-color: #fff #404040 #404040 #fff; box-sizing: border-box; }
.sb-down { width: 16px; height: 15px; margin-top: auto; }

.panel { flex: 1; padding-top: 2px; }
.p-row { display: flex; align-items: center; height: 18px; }
.p-row.two { height: 20px; margin-top: 3px; }
.p-lab { width: 10px; flex: none; font-size: 12px; }
.q-lab { margin-left: 4px; width: 13px; }
.p-in { height: 18px; padding-left: 2px; font-size: 12px; }
.w57 { width: 57px; }
.w48 { width: 48px; }
.p-acc { width: 108px; height: 20px; padding-left: 2px; font-size: 12px; letter-spacing: .2px; }
.acc-val { white-space: nowrap; }
.p-btns { display: flex; gap: 7px; margin-top: 6px; }
.p-btns.last { margin-top: 8px; }
.act { width: 16px; height: 16px; border-radius: 2px; border: 1px solid #a8a49c; box-sizing: border-box; background: #808080; display: flex; align-items: center; justify-content: center; font: 700 11px "Liberation Sans", sans-serif; color: #606060; position: relative; }
.act.off { background: #8c8a86; border-color: #d8d6d0; }
.act.hd, .act.hs { background: #8c8a86; border-color: #d8d6d0; }
.act.B, .act.Bm { background: #a8e8a8; border-color: #70a870; color: #4a6a4a; }
.act.S, .act.Sm { background: #f0b0b0; border-color: #b08080; color: #6a4a4a; }
.act sup { font-size: 7px; color: #c82020; line-height: 0; }
.act.small { width: 15px; }
.x-h { background: linear-gradient(135deg, #a8e8a8 50%, #f0b0b0 50%); border-color: #a0a0a0; }
.xm { position: absolute; left: 0; bottom: -2px; font: 700 10px "Liberation Sans", sans-serif; color: #e01010; }

.promo { position: absolute; left: 453px; top: 222px; font: 600 41.6px/59.3px "Noto Sans", sans-serif; color: #000; white-space: nowrap; }
.promo p { margin: 0; }
.und { text-decoration: underline; text-decoration-thickness: 4px; text-underline-offset: 6px; }
.mark { position: absolute; left: 76px; top: 371px; width: 218px; height: 165px; box-sizing: border-box; border: 5px solid #000; }
</style>

<style>
html, body { margin: 0; padding: 0; background: #d4d0c8; }
</style>
